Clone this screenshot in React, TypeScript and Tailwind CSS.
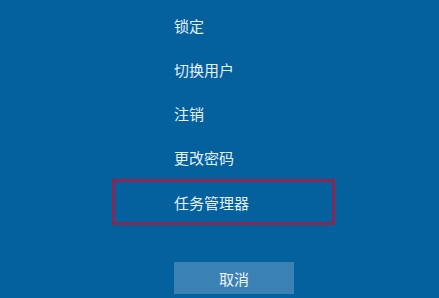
const items = ["锁定", "切换用户", "注销", "更改密码"];

export default function App() {
  return (
    <div
      className="w-[439px] h-[298px] bg-[#05609e] overflow-hidden text-[#e4f0fa] text-[15px]"
      style={{ fontFamily: '"Noto Sans CJK SC", "Noto Sans", sans-serif' }}
    >
      <div className="flex flex-col ml-[112px] w-[223px] pt-[3px]">
        {items.map((label) => (
          <div key={label} className="h-[44px] pl-[62px] flex items-center leading-none">
            {label}
          </div>
        ))}
        <div className="h-[46px] pl-[59px] flex items-center leading-none border-[3px] border-[#8a264f]">
          任务管理器
        </div>
      </div>
      <div className="flex mt-[37px] ml-[174px]">
        <button className="w-[120px] h-[32px] bg-[#3a81b4] flex items-center justify-center leading-none text-[#eef6fc]">
          取消
        </button>
      </div>
    </div>
  );
}
